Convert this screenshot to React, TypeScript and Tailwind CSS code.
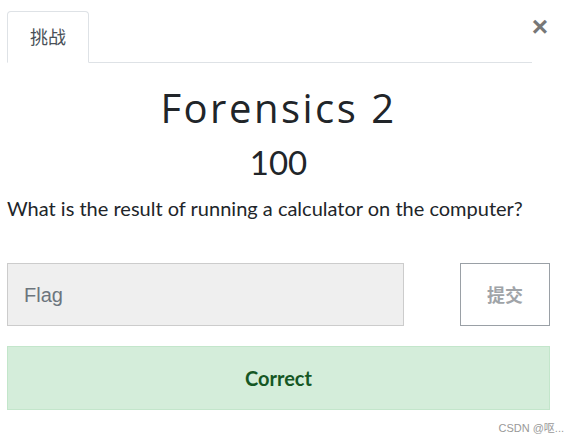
import React from 'react';

export default function App() {
  return (
    <div className="relative w-[578px] h-[443px] bg-white overflow-hidden" style={{ fontFamily: 'Lato, "Noto Sans CJK SC", sans-serif' }}>
      <div className="flex items-start pl-[7px] pr-[46px] pt-[11px]">
        <div className="flex flex-1 border-b border-[#dee2e6]">
          <div className="-mb-px w-[82px] h-[52px] flex items-center justify-center border border-[#dee2e6] border-b-white rounded-t-[4px] bg-white text-[18px] text-[#495057]">
            挑战
          </div>
        </div>
        <button type="button" className="absolute right-[30px] top-[13px] text-[28px] leading-none font-bold text-[#777]" style={{ fontFamily: '"Liberation Sans", sans-serif' }}>
          ×
        </button>
      </div>

      <div className="ml-[7px] mr-[28px]">
        <h1 className="mt-[21px] text-center text-[40px] leading-[48px] font-normal tracking-[2.5px] text-[#212529]" style={{ fontFamily: '"Open Sans", sans-serif' }}>
          Forensics 2
        </h1>
        <h2 className="mt-[10px] text-center text-[33px] leading-[40px] font-normal text-[#212529]">100</h2>
        <p className="mt-[12px] text-[20px] leading-[28px] text-[#212529]">
          What is the result of running a calculator on the computer?
        </p>

        <div className="mt-[41px] flex">
          <div className="w-[397px] h-[63px] flex items-center pl-[16px] bg-[#efefef] border border-[#ccc] text-[20px] text-[#6c757d]" style={{ fontFamily: '"Liberation Sans", sans-serif' }}>
            Flag
          </div>
          <div className="ml-auto w-[90px] h-[63px] flex items-center justify-center border border-[#9aa0a6] text-[18px] font-bold text-[#a0a4a8]" style={{ fontFamily: '"Noto Sans CJK SC", sans-serif' }}>
            提交
          </div>
        </div>

        <div className="mt-[20px] h-[64px] flex items-center justify-center bg-[#d4edda] border border-[#c3e6cb] text-[20px] font-bold text-[#155724]">
          Correct
        </div>
      </div>

      <div className="absolute right-[14px] bottom-[7px] text-[11px] text-[#999]" style={{ fontFamily: '"Liberation Sans", "Noto Sans CJK SC", sans-serif' }}>
        CSDN @呕...
      </div>
    </div>
  );
}
